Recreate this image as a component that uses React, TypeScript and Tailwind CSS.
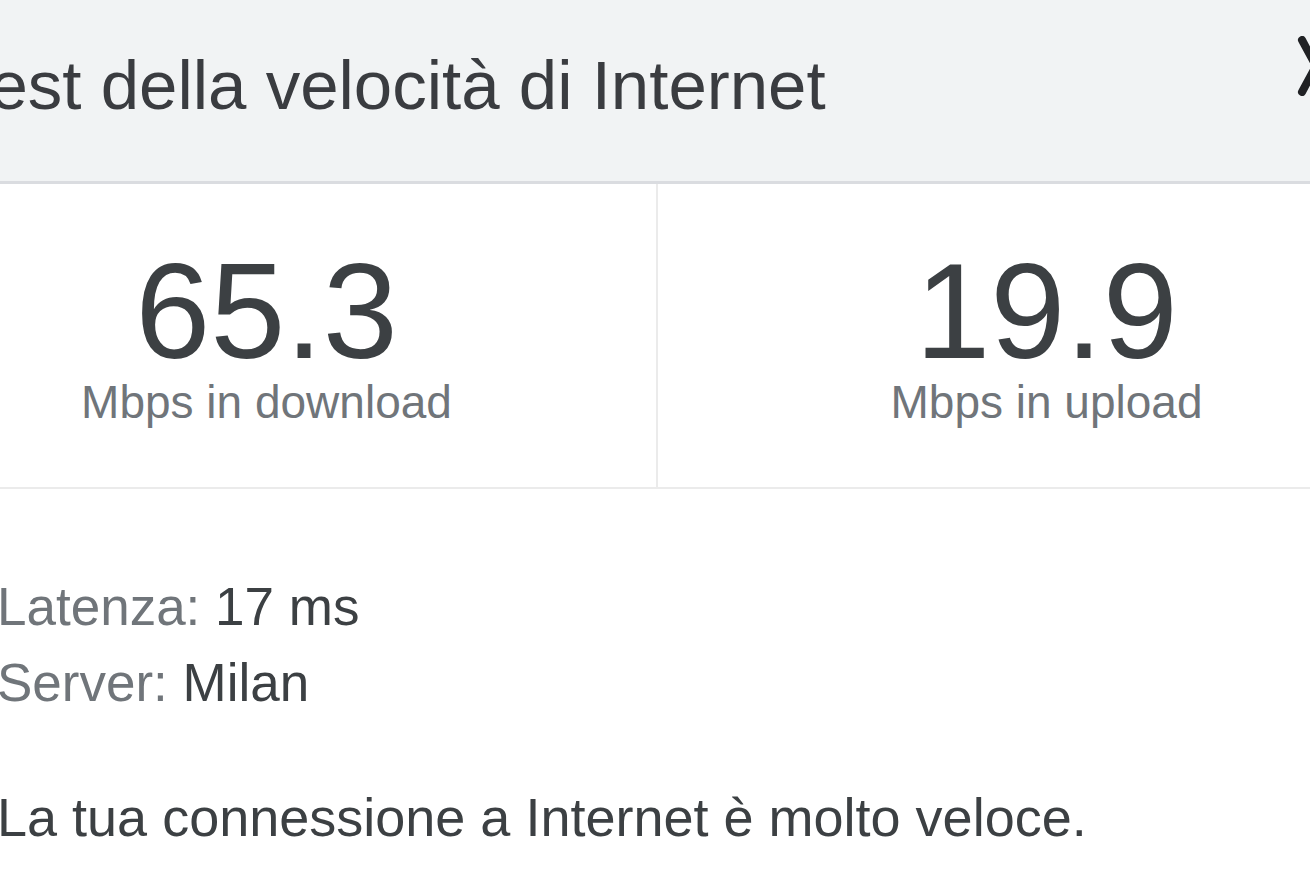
const font = { fontFamily: '"Liberation Sans", Arial, sans-serif' }

function Stat({ value, label }: { value: string; label: string }) {
  return (
    <div className="flex flex-col items-center pt-[60px]">
      <div className="text-[135px] leading-none text-[#3c4043]">{value}</div>
      <div className="text-[46px] leading-none text-[#70757a]">{label}</div>
    </div>
  )
}

export default function App() {
  return (
    <div className="w-[1310px] h-[875px] overflow-hidden bg-white" style={font}>
      <div className="w-[1558px] -ml-[123px]">
        {/* header */}
        <div className="relative h-[184px] bg-[#f1f3f4] border-b-[3px] border-[#dadce0] pl-[78px] pt-[51px]">
          <div className="text-[69px] leading-none text-[#3a3c40] whitespace-nowrap">
            Test della velocità di Internet
          </div>
          <svg
            className="absolute left-[1419px] top-[36px]"
            width="40"
            height="60"
            viewBox="0 0 40 60"
          >
            <path
              d="M6 4 L34 56 M6 56 L34 4"
              stroke="#202124"
              strokeWidth="8"
              strokeLinecap="round"
              fill="none"
            />
          </svg>
        </div>

        {/* results */}
        <div className="grid grid-cols-2 h-[305px] border-b-2 border-[#ebebeb]">
          <Stat value="65.3" label="Mbps in download" />
          <div className="border-l-2 border-[#ebebeb]">
            <Stat value="19.9" label="Mbps in upload" />
          </div>
        </div>

        {/* details */}
        <div className="pl-[120px] pt-[80px]">
          <div className="text-[53px] leading-[76px]">
            <div>
              <span className="text-[#70757a]">Latenza: </span>
              <span className="text-[#3c4043]">17 ms</span>
            </div>
            <div>
              <span className="text-[#70757a]">Server: </span>
              <span className="text-[#3c4043]">Milan</span>
            </div>
          </div>
          <div className="mt-[58px] text-[54px] leading-[76px] text-[#3c4043]">
            La tua connessione a Internet è molto veloce.
          </div>
        </div>
      </div>
    </div>
  )
}
